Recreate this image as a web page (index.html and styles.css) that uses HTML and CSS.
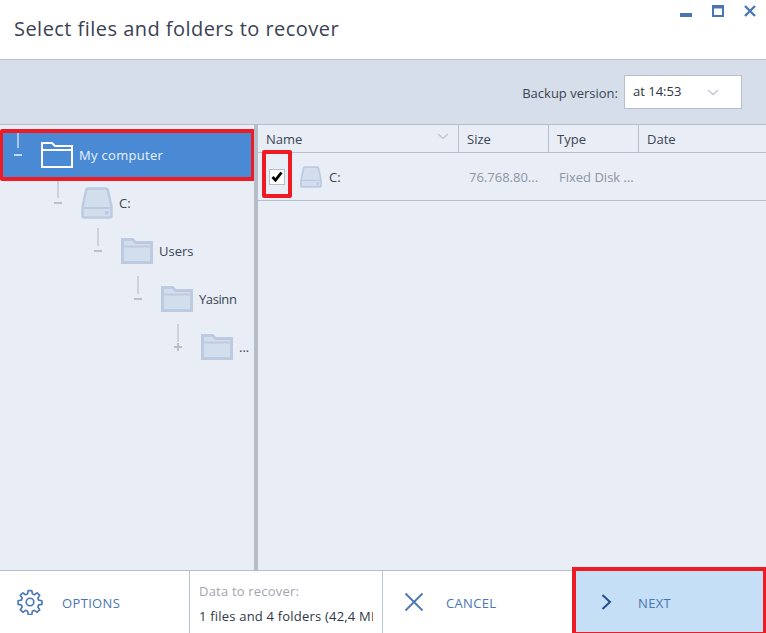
FILE: index.html
```html
<!DOCTYPE html>
<html lang="en">
<head>
<meta charset="utf-8">
<title>Select files and folders to recover</title>
<link rel="stylesheet" href="styles.css">
</head>
<body>
<svg class="defs" width="0" height="0" aria-hidden="true">
  <symbol id="folder" viewBox="0 0 32 26">
    <path d="M1.500 24.500V1.500h10l3 3h16v20z" fill="#d3deed" stroke="#bccbe2" stroke-width="3"/>
    <path d="M1.500 8.500h29" fill="none" stroke="#bccbe2" stroke-width="2"/>
  </symbol>
  <symbol id="drive" viewBox="0 0 32 32">
    <path d="M7 1.500h18c1 0 1.500.6 1.800 1.500L30.500 20v9c0 1-.5 1.500-1.500 1.500H3c-1 0-1.500-.5-1.500-1.500v-9L5.200 3C5.500 2.100 6 1.500 7 1.500z" fill="#d3deed" stroke="#bccbe2" stroke-width="2.500"/>
    <path d="M2 21h28" stroke="#bccbe2" stroke-width="2"/>
    <rect x="24" y="24" width="3.500" height="3.500" fill="#bccbe2"/>
  </symbol>
</svg>
<div class="window">
  <header class="titlebar">
    <h1 class="title">Select files and folders to recover</h1>
    <div class="winctl">
      <svg width="12" height="12" viewBox="0 0 12 12"><rect y="8" width="12" height="4" fill="#4a76b4"/></svg>
      <svg width="12" height="12" viewBox="0 0 12 12"><path d="M1 1h10v10H1z" fill="none" stroke="#4a76b4" stroke-width="2"/><rect x="0" y="0" width="12" height="3.500" fill="#4a76b4"/></svg>
      <svg width="12" height="12" viewBox="0 0 12 12"><path d="M1 1l10 10M11 1L1 11" fill="none" stroke="#4a76b4" stroke-width="2.400"/></svg>
    </div>
  </header>
  <div class="toolbar">
    <span class="version-label">Backup version:</span>
    <div class="select">
      <span class="select-value">at 14:53</span>
      <svg width="12" height="7" viewBox="0 0 12 7"><path d="M1 1l5 4.500L11 1" fill="none" stroke="#c3c9d3" stroke-width="1.500"/></svg>
    </div>
  </div>
  <main class="content">
    <nav class="tree">
      <div class="node node-selected l0">
        <span class="conn"><i class="vline"></i><i class="minus"></i></span>
        <svg class="node-icon" width="32" height="26" viewBox="0 0 32 26"><path d="M1 25V1h10l3 3h17v21z M1 8h30" fill="none" stroke="#fff" stroke-width="2"/></svg>
        <span class="node-label">My computer</span>
      </div>
      <div class="node l1">
        <span class="conn"><i class="vline"></i><i class="minus"></i></span>
        <svg class="node-icon" width="32" height="32"><use href="#drive"/></svg>
        <span class="node-label">C:</span>
      </div>
      <div class="node l2">
        <span class="conn"><i class="vline"></i><i class="minus"></i></span>
        <svg class="node-icon" width="32" height="26"><use href="#folder"/></svg>
        <span class="node-label">Users</span>
      </div>
      <div class="node l3">
        <span class="conn"><i class="vline"></i><i class="minus"></i></span>
        <svg class="node-icon" width="32" height="26"><use href="#folder"/></svg>
        <span class="node-label node-label-tight">Yasinn</span>
      </div>
      <div class="node l4">
        <span class="conn"><i class="vline"></i><i class="minus"></i><i class="plus"></i></span>
        <svg class="node-icon" width="32" height="26"><use href="#folder"/></svg>
        <span class="node-label">...</span>
      </div>
      <div class="mark mark-tree"></div>
    </nav>
    <div class="splitter"></div>
    <section class="list">
      <div class="list-head">
        <div class="col col-name">Name
          <svg width="12" height="7" viewBox="0 0 12 7"><path d="M1 1l5 4.500L11 1" fill="none" stroke="#c3c9d3" stroke-width="1.500"/></svg>
        </div>
        <div class="col">Size</div>
        <div class="col">Type</div>
        <div class="col col-last">Date</div>
      </div>
      <div class="list-row">
        <div class="cell cell-name">
          <span class="check"><svg width="12" height="11" viewBox="0 0 12 11"><path d="M1.500 6l3 3.200L10.500 1.500" fill="none" stroke="#000" stroke-width="2.800"/></svg></span>
          <svg class="row-icon" width="22" height="22"><use href="#drive"/></svg>
          <span class="row-name">C:</span>
        </div>
        <div class="cell cell-muted">76.768.80...</div>
        <div class="cell cell-muted">Fixed Disk ...</div>
        <div class="cell"></div>
      </div>
      <div class="mark mark-check"></div>
    </section>
  </main>
  <footer class="footer">
    <div class="fbtn fbtn-options">
      <svg width="26" height="26" viewBox="0 0 24 24" fill="none" stroke="#4a76b4" stroke-width="1.500" stroke-linejoin="round"><circle cx="12" cy="12" r="3.500"/><path d="M10.300 1.500h3.400l.5 3 1.900.8 2.500-1.800 2.400 2.400-1.800 2.500.8 1.900 3 .5v3.400l-3 .5-.8 1.900 1.800 2.500-2.400 2.400-2.500-1.800-1.900.8-.5 3h-3.400l-.5-3-1.900-.8-2.500 1.800-2.400-2.400 1.800-2.500-.8-1.900-3-.5v-3.400l3-.5.8-1.900-1.800-2.500 2.400-2.400 2.500 1.800 1.900-.8z"/></svg>
      <span class="fbtn-text">OPTIONS</span>
    </div>
    <div class="summary">
      <div class="summary-label">Data to recover:</div>
      <div class="summary-value">1 files and 4 folders (42,4 MB)</div>
    </div>
    <div class="fbtn fbtn-cancel">
      <svg width="20" height="20" viewBox="0 0 20 20"><path d="M1.500 1.500l17 17M18.500 1.500l-17 17" fill="none" stroke="#4a76b4" stroke-width="1.800"/></svg>
      <span class="fbtn-text">CANCEL</span>
    </div>
    <div class="fbtn fbtn-next">
      <svg width="11" height="16" viewBox="0 0 11 16"><path d="M1.500 1l7.500 7-7.500 7" fill="none" stroke="#1f4f8e" stroke-width="2"/></svg>
      <span class="fbtn-text">NEXT</span>
      <div class="mark mark-next"></div>
    </div>
  </footer>
</div>
</body>
</html>
```

FILE: styles.css
```css
* { box-sizing: border-box; }
html, body { margin: 0; padding: 0; }
body {
  width: 766px;
  height: 633px;
  overflow: hidden;
  background: #e8edf6;
  font-family: "Open Sans", "Noto Sans", sans-serif;
  font-size: 13px;
  color: #3c4454;
}
.defs { position: absolute; }
.window { display: flex; flex-direction: column; height: 633px; }

.titlebar {
  height: 60px;
  flex: none;
  background: #fff;
  border-bottom: 1px solid #b6bfcb;
  display: flex;
  justify-content: space-between;
  align-items: flex-start;
}
.title {
  margin: 15px 0 0 14px;
  font-size: 20px;
  line-height: 28px;
  font-weight: 400;
  color: #3a4252;
  letter-spacing: 0.46px;
}
.winctl { display: flex; gap: 20px; padding: 5px 10px 0 0; }
.winctl svg { display: block; }

.toolbar {
  height: 65px;
  flex: none;
  background: #d6deea;
  border-bottom: 1px solid #b6bfcb;
  display: flex;
  align-items: flex-start;
  padding: 15px 24px 0 0;
  justify-content: flex-end;
}
.version-label { margin: 9px 6px 0 0; line-height: 18px; font-size: 13px; }
.select {
  width: 118px;
  height: 34px;
  background: #fff;
  border: 1px solid #b6bfcb;
  display: flex;
  align-items: center;
  padding: 0 22px 0 8px;
  justify-content: space-between;
  color: #2f3646;
}
.select-value { margin-top: -2px; }

.content { flex: 1; display: flex; min-height: 0; }
.tree { position: relative; width: 254px; flex: none; padding-top: 6px; overflow: hidden; }
.splitter { width: 4px; flex: none; background: #b5bdc9; }
.node { height: 48px; display: flex; align-items: center; position: relative; }
.node-selected { background: #4a8ad4; color: #e8f1fb; }
.l0 { padding-left: 8px; }
.l1 { padding-left: 48px; }
.l2 { padding-left: 88px; }
.l3 { padding-left: 128px; }
.l4 { padding-left: 168px; }
.conn { position: relative; width: 20px; height: 48px; flex: none; }
.vline { position: absolute; left: 9px; top: 1px; width: 2px; height: 18px; background: #ccd2dc; }
.minus { position: absolute; left: 6px; top: 23px; width: 8px; height: 2px; background: #b9bfca; }
.plus { position: absolute; left: 9px; top: 20px; width: 2px; height: 8px; background: #b9bfca; }
.node-icon { margin-left: 13px; flex: none; }
.node-label { margin-left: 6px; white-space: nowrap; color: #3c4454; }
.node-label-tight { letter-spacing: -0.4px; }
.node-selected .node-label { color: #e8f1fb; letter-spacing: 0.3px; }
.node-selected .vline { background: #a9c6ea; top: 2px; height: 15px; }
.node-selected .minus { background: #c5d9f2; }

.list { position: relative; flex: 1; min-width: 0; }
.list-head, .list-row {
  display: grid;
  grid-template-columns: 201px 90px 90px 1fr;
  border-bottom: 1px solid #b6bfcb;
}
.list-head { height: 28px; }
.list-row { height: 48px; }
.col {
  border-right: 1px solid #b6bfcb;
  padding: 2px 8px 0;
  line-height: 25px;
  display: flex;
  justify-content: space-between;
  align-items: center;
  color: #3c4454;
}
.col-last { border-right: 0; }
.col-name svg { margin-right: 1px; margin-top: -6px; }
.cell { display: flex; align-items: center; padding-left: 10px; white-space: nowrap; }
.cell-name { padding-left: 11px; }
.cell-muted { color: #8d95a5; }
.check {
  width: 16px;
  height: 16px;
  background: #fff;
  border: 1px solid #b6bfcb;
  display: flex;
  align-items: center;
  justify-content: center;
  flex: none;
}
.row-icon { margin-left: 15px; flex: none; }
.row-name { margin-left: 7px; }

.footer {
  height: 63px;
  flex: none;
  background: #fff;
  border-top: 1px solid #b6bfcb;
  display: flex;
}
.fbtn { display: flex; align-items: center; color: #4a76b4; font-size: 13px; position: relative; flex: none; }
.fbtn-text { letter-spacing: 0.35px; margin-top: 2px; }
.fbtn-options { width: 189px; padding-left: 17px; gap: 19px; }
.fbtn-cancel { width: 190px; padding-left: 21px; gap: 22px; border-left: 1px solid #b9c4d8; }
.fbtn-next { flex: 1; background: #c5dff7; padding-left: 29px; gap: 26px; }
.summary {
  width: 193px;
  flex: none;
  border-left: 1px solid #b9c4d8;
  padding: 11px 0 0 9px;
  overflow: hidden;
}
.summary-label { color: #a3a6ae; line-height: 18px; letter-spacing: 0.2px; }
.summary-value { margin-top: 7px; line-height: 18px; width: 174px; overflow: hidden; white-space: nowrap; color: #2f3646; letter-spacing: 0.2px; }

.mark { position: absolute; border: 4px solid #ed1c24; pointer-events: none; }
.mark-tree { left: 0; top: 4px; width: 255px; height: 52px; border-radius: 2px; border-width: 4px 4px 4px 3px; }
.mark-check { left: 4px; top: 25px; width: 30px; height: 48px; border-radius: 2px; }
.mark-next { left: 0; top: -4px; right: 0; bottom: 0; border-width: 4px 3px 1px 4px; }
```
